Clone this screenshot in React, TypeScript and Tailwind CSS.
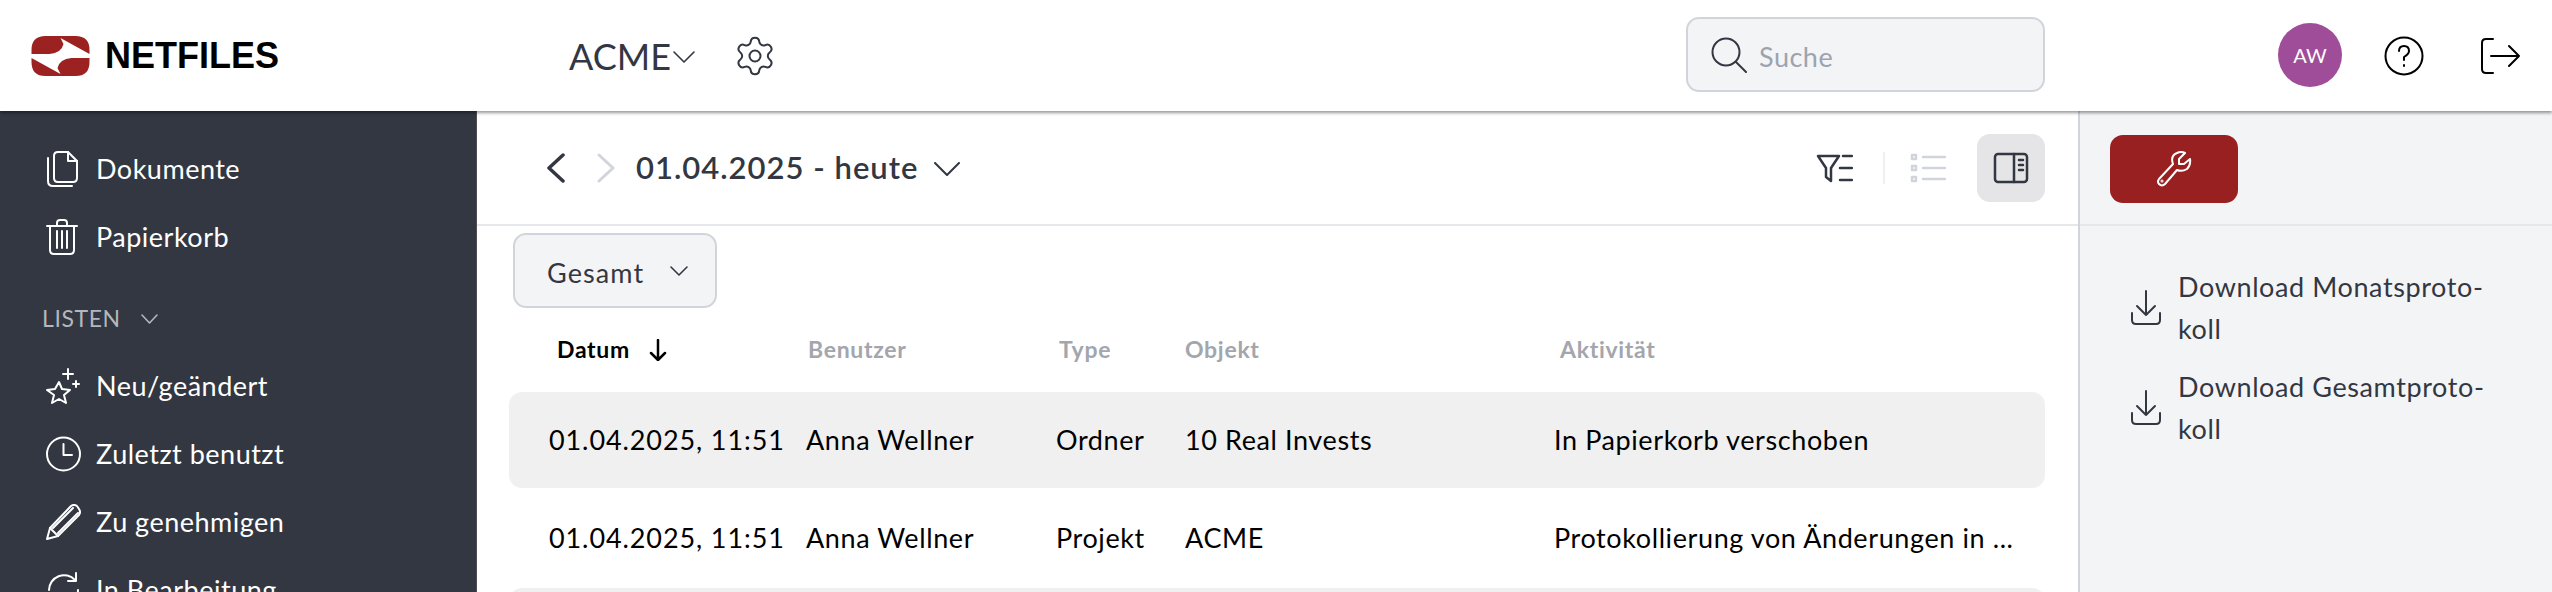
import type { ReactNode } from 'react';
import { Settings } from 'lucide-react';

const Ico = ({ w, h, box, sw = 2, className = '', children }: { w: number; h: number; box?: string; sw?: number; className?: string; children: ReactNode }) => (
  <svg width={w} height={h} viewBox={box ?? `0 0 ${w} ${h}`} fill="none" stroke="currentColor" strokeWidth={sw} strokeLinecap="round" strokeLinejoin="round" className={`shrink-0 ${className}`}>
    {children}
  </svg>
);

const Logo = () => (
  <svg width={59} height={40} viewBox="0 0 58 40" className="shrink-0">
    <path fill="#9b2221" d="M0 18V14Q0 0 14 0H44Q58 0 58 14V18L29 2 32 8Q30 17 18 18Z" />
    <path fill="#9b2221" d="M58 22V26Q58 40 44 40H14Q0 40 0 26V22L29 38 26 32Q28 23 40 22Z" />
  </svg>
);

const Chevron = ({ w = 22, h = 12, sw = 2, className = '' }: { w?: number; h?: number; sw?: number; className?: string }) => (
  <Ico w={w} h={h} sw={sw} className={className}>
    <path d={`M1 1L${w / 2} ${h - 1}L${w - 1} 1`} />
  </Ico>
);

const DownloadIcon = () => (
  <Ico w={32} h={36} className="text-[#333742]">
    <path d="M16 1V25M7 16L16 25L25 16" />
    <path d="M2 23V30Q2 34 6 34H26Q30 34 30 30V23" />
  </Ico>
);

const navTop = [
  {
    label: 'Dokumente',
    icon: (
      <Ico w={32} h={36}>
        <path d="M8 5Q8 1 12 1H22L31 10V27Q31 31 27 31H12Q8 31 8 27Z" />
        <path d="M22 1V10H31" />
        <path d="M2 7V30Q2 35 7 35H26" />
      </Ico>
    ),
  },
  {
    label: 'Papierkorb',
    icon: (
      <Ico w={32} h={36}>
        <path d="M1 7H31M11 7V4Q11 1 14 1H18Q21 1 21 4V7" />
        <path d="M4 7V31Q4 35 8 35H24Q28 35 28 31V7" />
        <path d="M11 12V29M16 12V29M21 12V29" />
      </Ico>
    ),
  },
];

const navLists = [
  {
    label: 'Neu/geändert',
    icon: (
      <Ico w={35} h={36}>
        <path d="M13 14L16 21L24 22L18 27L20 35L13 31L6 35L8 27L1 22L9 21Z" />
        <path d="M22 1V11M17 6H27M30 13V19M27 16H33" />
      </Ico>
    ),
  },
  {
    label: 'Zuletzt benutzt',
    icon: (
      <Ico w={35} h={36}>
        <circle cx="17.5" cy="18" r="16.5" />
        <path d="M17.5 8V19H26" />
      </Ico>
    ),
  },
  {
    label: 'Zu genehmigen',
    icon: (
      <Ico w={35} h={36}>
        <path d="M1 35L4 24L25 2Q28 0 31 2L33 5Q35 8 33 11L12 32Z" />
        <path d="M4 24L12 32M7 24L27 4M12 29L32 9" />
      </Ico>
    ),
  },
  {
    label: 'In Bearbeitung',
    icon: (
      <Ico w={35} h={36}>
        <path d="M3 18A15 15 0 0 1 29 8M30 1V9H22" />
        <path d="M32 18A15 15 0 0 1 6 28" />
      </Ico>
    ),
  },
];

const NavRow = ({ icon, label }: { icon: ReactNode; label: string }) => (
  <div className="h-[68px] flex items-center pl-[46px]">
    <div className="w-[50px]">{icon}</div>
    <span className="text-[27px] tracking-[0.5px]">{label}</span>
  </div>
);

const cols = 'grid grid-cols-[297px_250px_129px_369px_1fr]';

const rows = [
  ['01.04.2025, 11:51', 'Anna Wellner', 'Ordner', '10 Real Invests', 'In Papierkorb verschoben'],
  ['01.04.2025, 11:51', 'Anna Wellner', 'Projekt', 'ACME', 'Protokollierung von Änderungen in ...'],
  ['01.04.2025, 11:51', 'Anna Wellner', 'Ordner', '10 Real Invests', 'In Papierkorb verschoben'],
];

export default function App() {
  return (
    <div className="h-screen overflow-hidden flex flex-col bg-white font-['Lato','Liberation_Sans',sans-serif] text-[#333742]">
      <header className="relative z-10 h-[111px] shrink-0 bg-white flex items-center shadow-[0_2px_3px_rgba(0,0,0,0.4)]">
        <div className="w-[569px] pl-[31px] flex items-center gap-[15px]">
          <Logo />
          <span className="font-['Liberation_Sans',sans-serif] font-bold text-[36px] leading-none text-black">NETFILES</span>
        </div>
        <span className="text-[36px] leading-none">ACME</span>
        <Chevron sw={1.6} className="ml-[2px] mt-[3px]" />
        <div className="ml-[38px]">
          <Settings size={44} strokeWidth={1.1} />
        </div>
        <div className="ml-auto w-[359px] h-[75px] -mt-[2px] flex items-center bg-[#f3f4f6] border-2 border-[#d1d5db] rounded-[13px] pl-[23px]">
          <Ico w={36} h={36}>
            <circle cx="15" cy="15" r="13.5" />
            <path d="M25 25L35 35" />
          </Ico>
          <span className="ml-[12px] mt-[6px] text-[27px] tracking-[0.5px] text-[#9ca3af]">Suche</span>
        </div>
        <div className="ml-[233px] w-[64px] h-[64px] -mt-[1px] rounded-full bg-[#a04d99] text-white text-[20px] flex items-center justify-center">AW</div>
        <div className="ml-[42px] text-black">
          <Ico w={40} h={40}>
            <circle cx="20" cy="20" r="18.5" />
            <path d="M15 15Q15 10 20 10Q25 10 25 15Q25 18 20 21V24M20 29V30" />
          </Ico>
        </div>
        <div className="ml-[56px] mr-[32px] text-black">
          <Ico w={40} h={36}>
            <path d="M13 1H6Q2 1 2 5V31Q2 35 6 35H13" />
            <path d="M11 18H39M29 8L39 18L29 28" />
          </Ico>
        </div>
      </header>

      <div className="flex flex-1 min-h-0">
        <aside className="w-[477px] shrink-0 bg-[#333742] text-white pt-[24px] border-r border-[#4b4f5a]">
          {navTop.map(n => <NavRow key={n.label} {...n} />)}
          <div className="h-[68px] mt-[13px] flex items-center pl-[42px] text-[#b4b7bd]">
            <span className="text-[23px] tracking-[0.6px]">LISTEN</span>
            <Chevron w={17} h={10} sw={1.6} className="ml-[20px] mt-[2px]" />
          </div>
          {navLists.map(n => <NavRow key={n.label} {...n} />)}
        </aside>

        <main className="flex-1 min-w-0 flex flex-col">
          <div className="h-[115px] shrink-0 border-b-2 border-[#e5e7eb] flex items-center pl-[68px] pr-[33px]">
            <Ico w={20} h={30} sw={3.5} className="text-[#333742]">
              <path d="M18 2L4 15L18 28" />
            </Ico>
            <Ico w={20} h={30} sw={3} className="ml-[32px] text-[#d1d5db]">
              <path d="M2 2L16 15L2 28" />
            </Ico>
            <span className="ml-[19px] text-[31px] tracking-[1px] font-semibold">01.04.2025 - heute</span>
            <Chevron w={26} h={14} className="ml-[16px] mt-[3px]" />
            <div className="ml-auto flex items-center">
              <Ico w={37} h={30} sw={2.5}>
                <path d="M2 3H23L15 15V28L10 24V15Z" />
                <path d="M27 3H36M24 15H36M24 27H36" />
              </Ico>
              <div className="ml-[30px] w-[2px] h-[32px] bg-[#eef0f2]" />
              <Ico w={36} h={30} sw={2.5} className="ml-[25px] text-[#d1d5db]">
                <rect x="2" y="2" width="4" height="4" />
                <rect x="2" y="13" width="4" height="4" />
                <rect x="2" y="24" width="4" height="4" />
                <path d="M13 4H35M13 15H35M13 26H35" />
              </Ico>
              <div className="ml-[31px] w-[68px] h-[68px] rounded-[13px] bg-[#e5e5e7] flex items-center justify-center">
                <Ico w={36} h={32} sw={2.5}>
                  <rect x="2" y="2" width="32" height="28" rx="3" />
                  <path d="M21 2V30M26 8H30M26 13H30M26 18H30" />
                </Ico>
              </div>
            </div>
          </div>

          <div className="pl-[32px] pr-[33px] pt-[7px]">
            <div className="ml-[4px] w-[204px] h-[75px] flex items-center bg-[#f3f4f6] border-2 border-[#d1d5db] rounded-[13px] pl-[32px]">
              <span className="mt-[6px] text-[27px] tracking-[1.1px]">Gesamt</span>
              <Chevron w={18} h={10} sw={1.6} className="ml-[26px]" />
            </div>
            <div className={`${cols} h-[84px] pb-[2px] items-center text-[23px] tracking-[0.7px] font-bold text-[#a3a6ad]`}>
              <div className="pl-[48px] flex items-center text-black">
                Datum
                <Ico w={20} h={22} sw={2.5} className="ml-[18px] mt-[2px]">
                  <path d="M10 1V21M3 14L10 21L17 14" />
                </Ico>
              </div>
              <div className="pl-[2px]">Benutzer</div>
              <div className="pl-[3px]">Type</div>
              <div>Objekt</div>
              <div className="pl-[6px]">Aktivität</div>
            </div>
            <div className="flex flex-col gap-[2px] text-[27px] tracking-[0.6px] text-black">
              {rows.map((r, i) => (
                <div key={i} className={`${cols} h-[96px] items-center rounded-[13px] ${i % 2 === 0 ? 'bg-[#f0f0f0]' : ''}`}>
                  <div className="pl-[40px] tracking-[0.9px]">{r[0]}</div>
                  <div>{r[1]}</div>
                  <div>{r[2]}</div>
                  <div>{r[3]}</div>
                  <div className="truncate">{r[4]}</div>
                </div>
              ))}
            </div>
          </div>
        </main>

        <aside className="w-[474px] shrink-0 bg-[#f3f4f6] border-l-2 border-[#d1d5db]">
          <div className="h-[115px] border-b-2 border-[#e5e7eb] pl-[30px] pt-[24px]">
            <div className="w-[128px] h-[68px] rounded-[13px] bg-[#992020] text-white flex items-center justify-center">
              <Ico w={36} h={36}>
                <path d="M3 28L17 13Q14 5 21 2Q25 0 29 2L23 8V13H28L34 8Q35 14 31 18Q26 21 21 19L9 33Q6 36 3 33Q1 31 3 28Z" />
                <circle cx="6" cy="30" r="0.5" />
              </Ico>
            </div>
          </div>
          <div className="pl-[50px] pt-[40px] w-[440px] text-[27px] tracking-[0.6px] leading-[42px]">
            <div className="flex items-center gap-[16px]">
              <DownloadIcon />
              <div>Download Monatsproto-<br />koll</div>
            </div>
            <div className="flex items-center gap-[16px] mt-[16px]">
              <DownloadIcon />
              <div>Download Gesamtproto-<br />koll</div>
            </div>
          </div>
        </aside>
      </div>
    </div>
  );
}
